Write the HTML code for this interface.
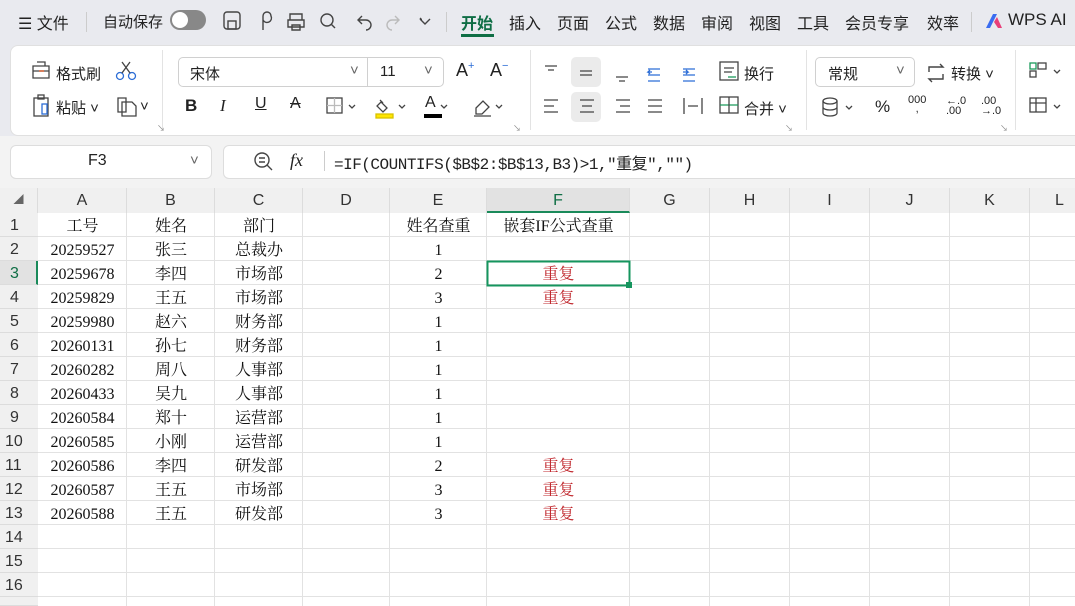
<!DOCTYPE html>
<html style="overflow:hidden;height:606px"><head><meta charset="utf-8"><style>
*{margin:0;padding:0;box-sizing:border-box}
body{width:1075px;height:606px;overflow:hidden;background:#e9eaef;font-family:"Liberation Sans","Noto Sans CJK SC",sans-serif;position:relative;color:#222}
.a{position:absolute;white-space:nowrap}
.t{font-size:16px;top:10px}
.r{font-size:15px}
svg{position:absolute}
.gh{position:absolute;top:188px;height:25px;background:#f0f0f0;border-right:1px solid #dcdcdc;font-size:16px;color:#333;text-align:center;line-height:26px}
.rh{position:absolute;left:0;width:38px;height:24px;background:#f0f0f0;border-bottom:1px solid #dcdcdc;font-size:16px;color:#333;line-height:26px;padding-left:10px}
.c{position:absolute;height:24px;line-height:27px;font-family:"Liberation Serif","Noto Serif CJK SC",serif;font-size:16px;text-align:center;color:#111}
.red{color:#c0272d}
</style></head><body>
<div class="a t" style="left:18px">☰ 文件</div>
<div class="a" style="left:86px;top:12px;width:1px;height:20px;background:#ccc"></div>
<div class="a t" style="left:103px;font-size:15px;top:11px">自动保存</div>
<div class="a" style="left:170px;top:10px;width:36px;height:20px;border-radius:10px;background:#888"><div style="position:absolute;left:2px;top:2px;width:16px;height:16px;border-radius:8px;background:#fff"></div></div>
<svg style="left:222px;top:10px" width="200" height="22" fill="none" stroke="#444" stroke-width="1.4">
<rect x="2" y="2" width="16" height="17" rx="3"/><rect x="6" y="11" width="8" height="8"/>
<path d="M68 4h12v6H68zM66 10h16v7H66zM70 15h8v5h-8z"/>
<circle cx="105" cy="10" r="6"/><path d="M109 14l4 4"/>
<path d="M140 6l-4 4 4 4M137 10h7a5 5 0 010 10"/>
<path d="M198 8l4 4 4-4" stroke="#444"/>
</svg>
<svg style="left:255px;top:10px" width="20" height="22" fill="none" stroke="#444" stroke-width="1.4"><path d="M8 20V6a4 4 0 118 0 4 4 0 01-8 4"/></svg>
<svg style="left:385px;top:10px" width="20" height="22" fill="none" stroke="#bbb" stroke-width="1.4"><path d="M10 6l4 4-4 4M13 10H7a5 5 0 000 10"/></svg>
<svg style="left:417px;top:10px" width="16" height="22" fill="none" stroke="#444" stroke-width="1.4"><path d="M3 9l5 5 5-5"/></svg>
<div class="a" style="left:446px;top:12px;width:1px;height:20px;background:#ccc"></div>
<div class="a t" style="left:461px;font-weight:bold;color:#0f6e45">开始</div>
<div class="a" style="left:461px;top:34px;width:33px;height:3px;background:#0f6e45"></div>
<div class="a t" style="left:509px">插入</div>
<div class="a t" style="left:557px">页面</div>
<div class="a t" style="left:605px">公式</div>
<div class="a t" style="left:653px">数据</div>
<div class="a t" style="left:701px">审阅</div>
<div class="a t" style="left:749px">视图</div>
<div class="a t" style="left:797px">工具</div>
<div class="a t" style="left:845px">会员专享</div>
<div class="a t" style="left:927px">效率</div>
<div class="a" style="left:971px;top:12px;width:1px;height:20px;background:#ccc"></div>
<svg style="left:984px;top:12px" width="20" height="18"><path d="M2 16L9 2h4L6 16z" fill="#3a6cf0"/><path d="M10 10l3-5 5 11h-4z" fill="#e8407a"/></svg>
<div class="a t" style="left:1008px;font-size:17px">WPS AI</div>
<div class="a" style="left:10px;top:45px;width:1080px;height:91px;background:#fff;border-radius:8px;border:1px solid #e0e0e0"></div>
<svg style="left:30px;top:60px" width="140" height="60" fill="none" stroke="#444" stroke-width="1.3">
<path d="M3 6h16v12H3zM7 2h8v4M3 11h16" /><path d="M9 11h5" stroke="#d9531e"/>
<rect x="4" y="38" width="14" height="18"/><rect x="8" y="35" width="6" height="4"/><rect x="12" y="44" width="5" height="10" stroke="#2c6dd6"/>
<circle cx="90" cy="16" r="3.5" stroke="#2c6dd6"/><circle cx="102" cy="16" r="3.5" stroke="#2c6dd6"/><path d="M92 13L100 2M100 13L92 2"/>
<path d="M88 38h8v14h-8zM92 42h10l4 4v10H92z"/>
</svg>
<div class="a r" style="left:56px;top:63px">格式刷</div>
<div class="a r" style="left:56px;top:97px">粘贴 ˅</div>
<div class="a r" style="left:140px;top:98px">˅</div>
<div class="a" style="left:162px;top:50px;width:1px;height:80px;background:#e3e3e3"></div>
<div class="a" style="left:178px;top:57px;width:266px;height:30px;border:1px solid #d0d0d0;border-radius:5px"></div>
<div class="a" style="left:367px;top:58px;width:1px;height:28px;background:#d0d0d0"></div>
<div class="a r" style="left:190px;top:63px">宋体</div>
<div class="a r" style="left:350px;top:62px;color:#666">˅</div>
<div class="a r" style="left:380px;top:63px">11</div>
<div class="a r" style="left:424px;top:62px;color:#666">˅</div>
<div class="a" style="left:456px;top:60px;font-size:18px">A<sup style="font-size:11px;color:#2c6dd6">+</sup></div>
<div class="a" style="left:490px;top:60px;font-size:18px">A<sup style="font-size:11px;color:#2c6dd6">−</sup></div>
<div class="a" style="left:185px;top:96px;font-size:17px;font-weight:bold">B</div>
<div class="a" style="left:220px;top:96px;font-size:17px;font-style:italic;font-family:'Liberation Serif'">I</div>
<div class="a" style="left:255px;top:95px;font-size:16px;text-decoration:underline">U</div>
<div class="a" style="left:290px;top:95px;font-size:16px;text-decoration:line-through">A</div>
<svg style="left:326px;top:96px" width="190" height="24" fill="none" stroke="#444" stroke-width="1.3">
<rect x="1" y="2" width="15" height="15"/><path d="M8.5 2v15M1 9.5h15" stroke="#bbb"/><path d="M23 9l3 3 3-3"/>
<path d="M55 6l6 6-4 4-6-6zM54 4l3 3"/><rect x="50" y="18" width="17" height="4" fill="#ffe600" stroke="#d8c200"/><path d="M73 9l3 3 3-3"/>
<path d="M115 9l3 3 3-3"/><rect x="98" y="18" width="18" height="4" fill="#000" stroke="none"/>
<path d="M150 12l7-7 6 6-7 7h-6zM148 20h17"/><path d="M170 9l3 3 3-3"/>
</svg>
<div class="a" style="left:425px;top:94px;font-size:16px">A</div>
<div class="a" style="left:530px;top:50px;width:1px;height:80px;background:#e3e3e3"></div>
<div class="a" style="left:571px;top:57px;width:30px;height:30px;background:#ebebeb;border-radius:5px"></div>
<div class="a" style="left:571px;top:92px;width:30px;height:30px;background:#ebebeb;border-radius:5px"></div>
<svg style="left:540px;top:60px" width="170" height="60" fill="none" stroke="#444" stroke-width="1.3">
<path d="M5 6h12M8 10h6M40 11h12M40 15h12M76 17h12M79 21h6"/>
<path d="M108 9h12M108 15h12M108 21h12" stroke="#2c6dd6"/><path d="M112 12h-4l2-2M108 12l2 2" stroke="#2c6dd6"/>
<path d="M143 9h12M143 15h12M143 21h12M143 12h5l-2-2M148 12l-2 2" stroke="#2c6dd6"/>
<path d="M4 40h14M4 46h10M4 52h14M40 40h14M42 46h10M40 52h14M76 40h14M80 46h10M76 52h14M108 40h14M108 46h14M108 52h14M144 38v16M162 38v16M148 46h10"/>
</svg>
<svg style="left:718px;top:60px" width="24" height="60" fill="none" stroke="#444" stroke-width="1.3"><rect x="2" y="2" width="18" height="18"/><path d="M6 8h10M6 12h8" /><path d="M10 17h8" stroke="#1a9a5a"/><rect x="2" y="37" width="18" height="16"/><path d="M2 45h18" stroke="#1a9a5a"/><path d="M11 37v16"/></svg>
<div class="a r" style="left:744px;top:63px">换行</div>
<div class="a r" style="left:744px;top:98px">合并 ˅</div>
<div class="a" style="left:806px;top:50px;width:1px;height:80px;background:#e3e3e3"></div>
<div class="a" style="left:815px;top:57px;width:100px;height:30px;border:1px solid #d0d0d0;border-radius:5px"></div>
<div class="a r" style="left:828px;top:63px">常规</div>
<div class="a r" style="left:896px;top:62px;color:#666">˅</div>
<svg style="left:925px;top:62px" width="22" height="22" fill="none" stroke="#444" stroke-width="1.4"><path d="M4 10V5h14l-3-3M18 12v5H4l3 3"/></svg>
<div class="a r" style="left:951px;top:63px">转换 ˅</div>
<svg style="left:822px;top:96px" width="40" height="24" fill="none" stroke="#444" stroke-width="1.3"><ellipse cx="8" cy="5" rx="7" ry="3"/><path d="M1 5v12c0 4 14 4 14 0V5M1 11c0 4 14 4 14 0M24 10l3 3 3-3"/></svg>
<div class="a" style="left:875px;top:97px;font-size:17px">%</div>
<div class="a" style="left:908px;top:96px;font-size:11px;line-height:9px;text-align:center">000<br>,</div>
<div class="a" style="left:946px;top:96px;font-size:11px;line-height:10px">←.0<br>.00</div>
<div class="a" style="left:981px;top:96px;font-size:11px;line-height:10px">.00<br>→.0</div>
<div class="a" style="left:1015px;top:50px;width:1px;height:80px;background:#e3e3e3"></div>
<svg style="left:1028px;top:60px" width="47" height="60" fill="none" stroke="#444" stroke-width="1.3"><rect x="2" y="3" width="6" height="6" stroke="#1a9a5a"/><rect x="10" y="3" width="8" height="6"/><rect x="2" y="11" width="6" height="6"/><path d="M26 10l3 3 3-3"/><rect x="2" y="38" width="16" height="14"/><path d="M2 43h16M8 38v14"/><path d="M26 45l3 3 3-3"/></svg>
<div class="a" style="left:157px;top:123px;font-size:8px;color:#888">↘</div>
<div class="a" style="left:513px;top:123px;font-size:8px;color:#888">↘</div>
<div class="a" style="left:785px;top:123px;font-size:8px;color:#888">↘</div>
<div class="a" style="left:1000px;top:123px;font-size:8px;color:#888">↘</div>
<div class="a" style="left:0;top:136px;width:1075px;height:52px;background:#f3f3f3"></div>
<div class="a" style="left:10px;top:145px;width:202px;height:34px;background:#fff;border:1px solid #ddd;border-radius:6px"></div>
<div class="a" style="left:88px;top:152px;font-size:16px">F3</div>
<div class="a r" style="left:190px;top:152px;color:#666">˅</div>
<div class="a" style="left:223px;top:145px;width:860px;height:34px;background:#fff;border:1px solid #ddd;border-radius:6px"></div>
<svg style="left:253px;top:151px" width="22" height="22" fill="none" stroke="#444" stroke-width="1.4"><circle cx="9" cy="9" r="7"/><path d="M6 7h6M6 11h6M14 14l5 5"/></svg>
<div class="a" style="left:290px;top:150px;font-size:18px;font-style:italic;font-family:'Liberation Serif'">fx</div>
<div class="a" style="left:324px;top:151px;width:1px;height:20px;background:#ccc"></div>
<div class="a" style="left:334px;top:150px;font-size:16px;font-family:'Liberation Mono','Noto Sans CJK SC',monospace;letter-spacing:-0.5px;color:#222">=IF(COUNTIFS($B$2:$B$13,B3)&gt;1,"重复","")</div>
<div class="a" style="left:0;top:188px;width:1075px;height:418px;background:#fff"></div>
<div class="gh" style="left:0;width:38px;font-size:10px;color:#666">◢</div>
<div class="gh" style="left:38px;width:89px">A</div>
<div class="gh" style="left:127px;width:88px">B</div>
<div class="gh" style="left:215px;width:88px">C</div>
<div class="gh" style="left:303px;width:87px">D</div>
<div class="gh" style="left:390px;width:97px">E</div>
<div class="gh" style="left:487px;width:143px;background:#e2e2e2;color:#0f6e45;border-bottom:2px solid #1a8a5a">F</div>
<div class="gh" style="left:630px;width:80px">G</div>
<div class="gh" style="left:710px;width:80px">H</div>
<div class="gh" style="left:790px;width:80px">I</div>
<div class="gh" style="left:870px;width:80px">J</div>
<div class="gh" style="left:950px;width:80px">K</div>
<div class="gh" style="left:1030px;width:60px">L</div>
<svg style="left:38px;top:213px" width="1037" height="393">
<g stroke="#e2e2e2" stroke-width="1">
<path d="M88.5 0v393M176.5 0v393M264.5 0v393M351.5 0v393M448.5 0v393M591.5 0v393M671.5 0v393M751.5 0v393M831.5 0v393M911.5 0v393M991.5 0v393"/>
<path d="M0 23.5h1037M0 47.5h1037M0 71.5h1037M0 95.5h1037M0 119.5h1037M0 143.5h1037M0 167.5h1037M0 191.5h1037M0 215.5h1037M0 239.5h1037M0 263.5h1037M0 287.5h1037M0 311.5h1037M0 335.5h1037M0 359.5h1037M0 383.5h1037"/>
</g>
<rect x="449.5" y="48.5" width="142" height="24" fill="none" stroke="#15955e" stroke-width="2"/>
<rect x="588" y="69" width="6" height="6" fill="#15955e"/>
</svg>
<div class="rh" style="top:213px">1</div><div class="rh" style="top:237px">2</div>
<div class="rh" style="top:261px;background:#e2e2e2;color:#0f6e45;border-right:2px solid #1a8a5a">3</div>
<div class="rh" style="top:285px">4</div><div class="rh" style="top:309px">5</div><div class="rh" style="top:333px">6</div><div class="rh" style="top:357px">7</div><div class="rh" style="top:381px">8</div><div class="rh" style="top:405px">9</div>
<div class="rh" style="top:429px;padding-left:5px">10</div><div class="rh" style="top:453px;padding-left:5px">11</div><div class="rh" style="top:477px;padding-left:5px">12</div><div class="rh" style="top:501px;padding-left:5px">13</div><div class="rh" style="top:525px;padding-left:5px">14</div><div class="rh" style="top:549px;padding-left:5px">15</div><div class="rh" style="top:573px;padding-left:5px">16</div><div class="rh" style="top:597px;height:9px;padding-left:5px"></div>
<div class="c" style="left:38px;width:89px;top:213px">工号</div><div class="c" style="left:127px;width:88px;top:213px">姓名</div><div class="c" style="left:215px;width:88px;top:213px">部门</div><div class="c" style="left:390px;width:97px;top:213px">姓名查重</div><div class="c" style="left:487px;width:143px;top:213px">嵌套IF公式查重</div>
<div class="c" style="left:38px;width:89px;top:237px">20259527</div><div class="c" style="left:127px;width:88px;top:237px">张三</div><div class="c" style="left:215px;width:88px;top:237px">总裁办</div><div class="c" style="left:390px;width:97px;top:237px">1</div>
<div class="c" style="left:38px;width:89px;top:261px">20259678</div><div class="c" style="left:127px;width:88px;top:261px">李四</div><div class="c" style="left:215px;width:88px;top:261px">市场部</div><div class="c" style="left:390px;width:97px;top:261px">2</div><div class="c red" style="left:487px;width:143px;top:261px">重复</div>
<div class="c" style="left:38px;width:89px;top:285px">20259829</div><div class="c" style="left:127px;width:88px;top:285px">王五</div><div class="c" style="left:215px;width:88px;top:285px">市场部</div><div class="c" style="left:390px;width:97px;top:285px">3</div><div class="c red" style="left:487px;width:143px;top:285px">重复</div>
<div class="c" style="left:38px;width:89px;top:309px">20259980</div><div class="c" style="left:127px;width:88px;top:309px">赵六</div><div class="c" style="left:215px;width:88px;top:309px">财务部</div><div class="c" style="left:390px;width:97px;top:309px">1</div>
<div class="c" style="left:38px;width:89px;top:333px">20260131</div><div class="c" style="left:127px;width:88px;top:333px">孙七</div><div class="c" style="left:215px;width:88px;top:333px">财务部</div><div class="c" style="left:390px;width:97px;top:333px">1</div>
<div class="c" style="left:38px;width:89px;top:357px">20260282</div><div class="c" style="left:127px;width:88px;top:357px">周八</div><div class="c" style="left:215px;width:88px;top:357px">人事部</div><div class="c" style="left:390px;width:97px;top:357px">1</div>
<div class="c" style="left:38px;width:89px;top:381px">20260433</div><div class="c" style="left:127px;width:88px;top:381px">吴九</div><div class="c" style="left:215px;width:88px;top:381px">人事部</div><div class="c" style="left:390px;width:97px;top:381px">1</div>
<div class="c" style="left:38px;width:89px;top:405px">20260584</div><div class="c" style="left:127px;width:88px;top:405px">郑十</div><div class="c" style="left:215px;width:88px;top:405px">运营部</div><div class="c" style="left:390px;width:97px;top:405px">1</div>
<div class="c" style="left:38px;width:89px;top:429px">20260585</div><div class="c" style="left:127px;width:88px;top:429px">小刚</div><div class="c" style="left:215px;width:88px;top:429px">运营部</div><div class="c" style="left:390px;width:97px;top:429px">1</div>
<div class="c" style="left:38px;width:89px;top:453px">20260586</div><div class="c" style="left:127px;width:88px;top:453px">李四</div><div class="c" style="left:215px;width:88px;top:453px">研发部</div><div class="c" style="left:390px;width:97px;top:453px">2</div><div class="c red" style="left:487px;width:143px;top:453px">重复</div>
<div class="c" style="left:38px;width:89px;top:477px">20260587</div><div class="c" style="left:127px;width:88px;top:477px">王五</div><div class="c" style="left:215px;width:88px;top:477px">市场部</div><div class="c" style="left:390px;width:97px;top:477px">3</div><div class="c red" style="left:487px;width:143px;top:477px">重复</div>
<div class="c" style="left:38px;width:89px;top:501px">20260588</div><div class="c" style="left:127px;width:88px;top:501px">王五</div><div class="c" style="left:215px;width:88px;top:501px">研发部</div><div class="c" style="left:390px;width:97px;top:501px">3</div><div class="c red" style="left:487px;width:143px;top:501px">重复</div>
</body></html>
